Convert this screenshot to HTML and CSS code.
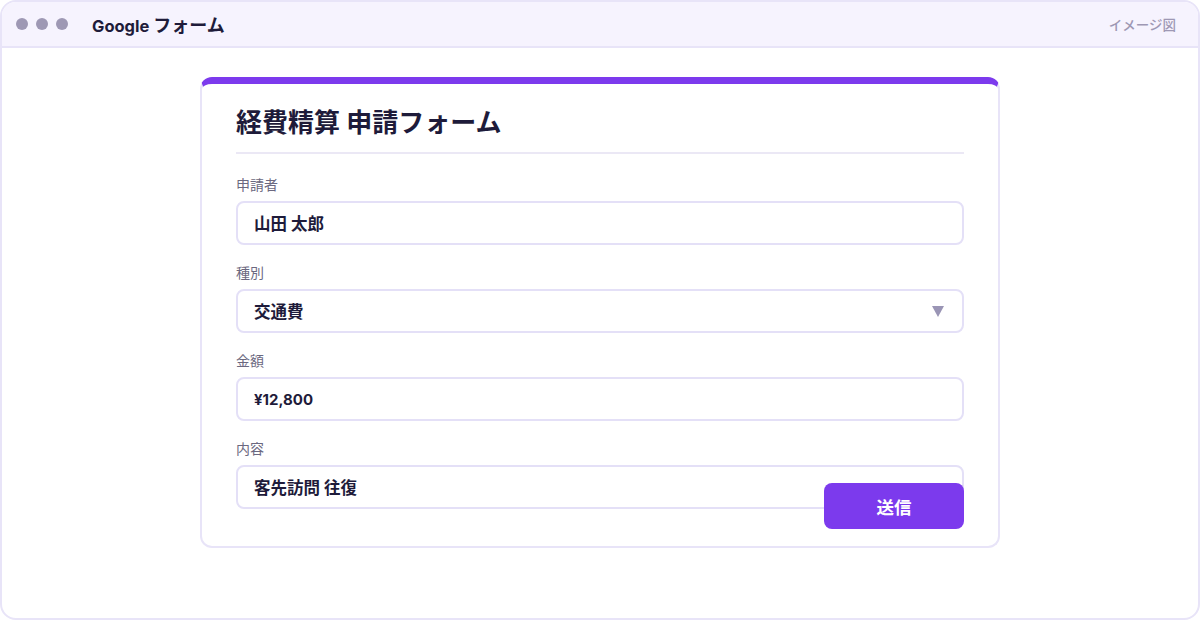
FILE: index.html
```html
<!DOCTYPE html>
<html lang="ja">
<head>
    <meta charset="UTF-8">
    <meta name="viewport" content="width=device-width, initial-scale=1.0">
    <title>Google フォーム</title>
    <link rel="stylesheet" href="styles.css">
</head>
<body>

    <div class="window">
        <div class="titlebar">
            <div class="dots">
                <span class="dot"></span>
                <span class="dot"></span>
                <span class="dot"></span>
            </div>
            <div class="app-name">Google <span class="ja">フォーム</span></div>
            <div class="note">イメージ図</div>
        </div>

        <div class="stage">
            <div class="form-card">
                <h1 class="form-title">経費精算 申請フォーム</h1>

                <div class="field">
                    <div class="field-label">申請者</div>
                    <div class="field-input">山田 太郎</div>
                </div>

                <div class="field">
                    <div class="field-label">種別</div>
                    <div class="field-input select">
                        <span>交通費</span>
                        <span class="caret"></span>
                    </div>
                </div>

                <div class="field">
                    <div class="field-label">金額</div>
                    <div class="field-input amount">¥12,800</div>
                </div>

                <div class="field">
                    <div class="field-label">内容</div>
                    <div class="field-input">客先訪問 往復</div>
                </div>

                <button class="submit">送信</button>
            </div>
        </div>
    </div>

</body>
</html>
```

FILE: styles.css
```css
body {
    font-family: Inter, "Noto Sans CJK JP", sans-serif;
    margin: 0;
    padding: 0;
    background: #ffffff;
    color: #1e1b3a;
}

.window {
    box-sizing: border-box;
    width: 1200px;
    height: 620px;
    border: 2px solid #e8e4f8;
    border-radius: 16px;
    overflow: hidden;
    background: #ffffff;
}

/* Title bar */
.titlebar {
    box-sizing: border-box;
    height: 46px;
    display: flex;
    align-items: center;
    padding: 0 22px 0 14px;
    background: #f6f3fe;
    border-bottom: 2px solid #e8e4f8;
}

.dots {
    display: flex;
    gap: 8px;
}

.dot {
    width: 12px;
    height: 12px;
    border-radius: 50%;
    background: #9e98b4;
}

.app-name {
    margin-left: 24px;
    font-size: 16.5px;
    font-weight: 700;
    color: #1e1b3a;
}

.app-name .ja {
    font-size: 18px;
}

.note {
    margin-left: auto;
    font-size: 13.5px;
    font-weight: 500;
    color: #9e98b4;
}

/* Form */
.stage {
    display: flex;
    justify-content: center;
    padding-top: 29px;
}

.form-card {
    position: relative;
    box-sizing: border-box;
    width: 800px;
    height: 471px;
    padding: 23px 34px 0;
    border: 2px solid #e8e4f8;
    border-top: 7px solid #7c3aed;
    border-radius: 12px;
    background: #ffffff;
}

.form-title {
    margin: 0 0 23px;
    padding-bottom: 13px;
    font-size: 26px;
    line-height: 32px;
    font-weight: 700;
    color: #1e1b3a;
    border-bottom: 2px solid #ebe8f5;
}

.field {
    margin-bottom: 20px;
}

.field-label {
    font-size: 14px;
    line-height: 16px;
    color: #6b6880;
    margin-bottom: 8px;
}

.field-input {
    box-sizing: border-box;
    height: 44px;
    display: flex;
    align-items: center;
    padding: 0 16px;
    border: 2px solid #e4e0f7;
    border-radius: 8px;
    font-size: 16.5px;
    font-weight: 700;
    color: #1e1b3a;
}

.field-input.amount {
    font-size: 15px;
}

.select {
    justify-content: space-between;
}

.caret {
    width: 0;
    height: 0;
    margin-right: 2px;
    border-left: 6px solid transparent;
    border-right: 6px solid transparent;
    border-top: 11px solid #9a95b5;
}

.submit {
    position: absolute;
    right: 34px;
    bottom: 17px;
    width: 140px;
    height: 46px;
    border: none;
    border-radius: 8px;
    background: #7c3aed;
    color: #ffffff;
    font-family: inherit;
    font-size: 17.5px;
    font-weight: 700;
    cursor: pointer;
}
```
